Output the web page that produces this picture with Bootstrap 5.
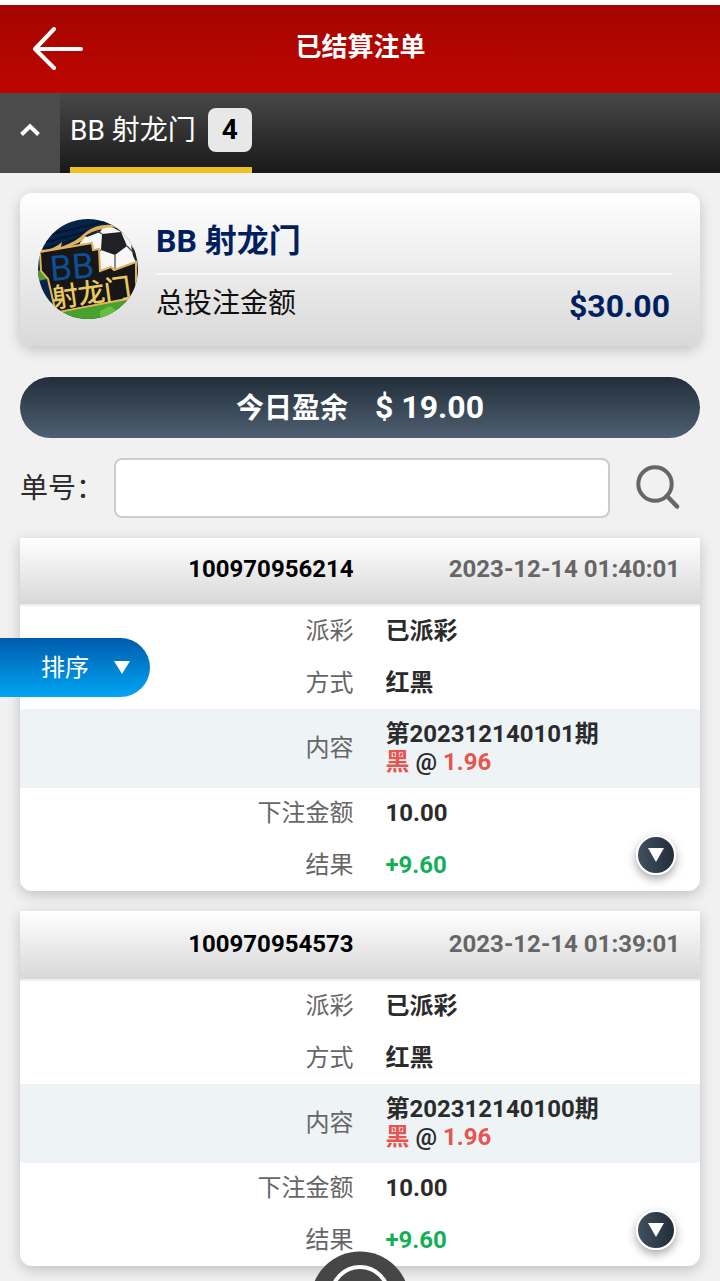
<!DOCTYPE html>
<html lang="zh-CN">
<head>
  <meta charset="UTF-8">
  <meta name="viewport" content="width=device-width, initial-scale=1.0">
  <title>已结算注单</title>
  <link href="https://cdn.jsdelivr.net/npm/bootstrap@5.3.3/dist/css/bootstrap.min.css" rel="stylesheet">
  <style>
    html { overflow: hidden; }
    body {
      height: 1281px;
      background: #f1f1f1;
      border-top: 5px solid #fff;
      font-family: Roboto, "Noto Sans CJK SC", sans-serif;
      font-size: 24px;
      line-height: 28px;
      color: #2b2b2b;
    }
    svg { display: block; }

    .top-bar { height: 88px; background: linear-gradient(#a40500, #be0600); }
    .back-link { width: 97px; padding-left: 32px; }
    .page-title { font-size: 26px; line-height: 30px; padding-bottom: 4px; }

    .game-tabs { height: 80px; background: linear-gradient(#484848, #191919); }
    .tab-toggle { width: 60px; padding-bottom: 6px; background: #4b4b4b; }
    .game-tab { margin-left: 10px; font-size: 28px; border-bottom: 6px solid #f0c020; }
    .tab-name { padding-top: 1px; }
    .tab-count { width: 44px; height: 44px; margin-left: 12px; border-radius: 8px; background: #e8e8e8; }

    .summary { height: 153px; margin-top: 20px; padding: 0 28px 1px 18px; border-radius: 12px; background: linear-gradient(#fff, #d9d9d9); box-shadow: 0 4px 14px rgba(0, 0, 0, .2); }
    .summary-text { margin-left: 18px; }
    .navy { color: #001f5f; }
    .game-name { height: 68px; padding-top: 2px; font-size: 32px; border-bottom: 2px solid #f6f6f6; }
    .total-row { height: 56px; padding: 2px 2px 0 0; font-size: 28px; color: #111; }
    .total-sum { font-size: 32px; padding-top: 4px; }

    .profit { height: 61px; margin-top: 31px; font-size: 28px; background: linear-gradient(#222e3a, #4f6072); }
    .profit-label { padding-top: 2px; }
    .profit-sum { margin-left: 27px; padding-bottom: 2px; font-size: 32px; }

    .search-row { height: 60px; margin: 20px 0; font-size: 28px; }
    .search-label { width: 94px; padding-top: 1px; }
    .search-row .form-control { width: 496px; height: 60px; border: 2px solid #ccc; border-radius: 8px; }
    .search-icon { margin: 0 0 2px 26px; }

    .bet { position: relative; margin-bottom: 20px; border-radius: 0 0 12px 12px; box-shadow: 0 4px 14px rgba(0, 0, 0, .2); }
    .bet-head { height: 70px; padding: 0 20px 2px 0; border-bottom: 2px solid #efefef; background: linear-gradient(#fff, #d8d8d8) padding-box; }
    .bet-first .bet-head { height: 68px; padding-bottom: 4px; }
    .bet-id, .bet-label { width: 333.5px; text-align: right; }
    .bet-id { color: #000; }
    .bet-time, .bet-label { color: #666; }
    .bet-row { height: 51.5px; padding-bottom: 1px; }
    .bet-value { margin-left: 32px; }
    .bet-content { height: 79px; background: #eef4f6; }
    .picked { color: #e85450; }
    .win { color: #13af58; }
    .expand { position: absolute; right: 24px; bottom: 16px; width: 40px; height: 40px; border: 2px solid #fff; border-radius: 50%; background: linear-gradient(90deg, #41505f, #222d39); box-shadow: 0 4px 10px rgba(0, 0, 0, .35); }

    .sort-btn { position: absolute; left: 0; top: 638px; width: 150px; height: 59px; padding-left: 41px; border-radius: 0 30px 30px 0; background: linear-gradient(#005bac, #00a6f4); }
    .sort-arrow { margin-left: 25px; }
    .home-btn { position: fixed; left: 308px; top: 1250px; }
  </style>
</head>
<body>
  <!-- Header -->
  <header class="top-bar d-flex align-items-center text-white">
    <a class="back-link" href="#" aria-label="返回">
      <svg width="52" height="44" viewBox="0 0 52 44" fill="none" stroke="#fff" stroke-width="4" stroke-linecap="round" stroke-linejoin="round">
        <path d="M22 2 3 22l19 19M3 22h46"/>
      </svg>
    </a>
    <h1 class="page-title flex-fill text-center fw-bold mb-0 pe-5 me-5">已结算注单</h1>
  </header>

  <!-- Game tabs -->
  <nav class="game-tabs d-flex text-white">
    <div class="tab-toggle d-flex align-items-center justify-content-center">
      <svg width="20" height="14" viewBox="0 0 20 14" fill="none" stroke="#fff" stroke-width="4"><path d="M1.500 11.500 10 3.200l8.500 8.300"/></svg>
    </div>
    <div class="game-tab d-flex align-items-center">
      <span class="tab-name">BB 射龙门</span>
      <span class="tab-count d-flex align-items-center justify-content-center fw-bold text-black">4</span>
    </div>
  </nav>

  <main class="px-3 mx-1">
    <!-- Summary -->
    <section class="summary d-flex align-items-center">
      <svg width="100" height="100" viewBox="0 0 100 100">
        <defs>
          <clipPath id="logoClip"><circle cx="50" cy="50" r="50"/></clipPath>
        </defs>
        <g clip-path="url(#logoClip)">
          <rect width="100" height="100" fill="#062448"/>
          <path d="M10 16 70 2M8 23 55 11M5 30 45 18" stroke="#04162f" stroke-width="2"/>
          <path d="M0 30Q13 33 24 23L23 28Q38 23 48 13 62 3 80 7L88 13 60 13 50 26 0 40Z" fill="#e2b35d"/>
          <path d="M3 34Q30 32 52 17L48 27 4 36Z" fill="#171717"/>
          <path d="M42 24Q50 13 64 10 80 5 92 17L98 40V60H50Z" fill="#f7f7f7"/>
          <path d="M64 15 83 13 89 27 77 36 63 31Z" fill="#202126"/>
          <path d="M47 17Q54 12 64 10L62 13 49 18Z M74 8 86 10 89 16 85 14Z M93 26Q99 34 98 43L95 37Z" fill="#202126"/>
          <path d="M77 36V50M63 31 55 35M89 27 95 33M64 15 59 12M83 13 85 10" stroke="#444" stroke-width="1.200" fill="none"/>
          <path d="M-2 48 9 60 0 62Z" fill="#4b9e31"/>
          <path d="M2 33 54 24 55 31 61 30 62 52 73 48 76 51 98 43 98 78 18 94 10 60 3 52Z" fill="#171717" stroke="#e2b35d" stroke-width="2"/>
          <path d="M14 95 98 79V100H14Z" fill="#49a12d"/>
          <path d="M62 92 72 87 82 94 62 100Z" fill="#69bd42"/>
          <path d="M14 94 96 79" stroke="#e2b35d" stroke-width="1.500"/>
          <text transform="translate(13 62) rotate(-5)" font-size="35" textLength="44" lengthAdjust="spacingAndGlyphs" fill="#0d4e98">BB</text>
          <text transform="translate(15 89) rotate(-8)" font-size="27" textLength="80" font-weight="500" fill="#eac961">射龙门</text>
        </g>
      </svg>
      <div class="summary-text flex-fill">
        <div class="game-name navy d-flex align-items-center fw-bold">BB 射龙门</div>
        <div class="total-row d-flex align-items-center justify-content-between">
          <span>总投注金额</span>
          <span class="total-sum navy fw-bold">$30.00</span>
        </div>
      </div>
    </section>

    <div class="profit rounded-pill d-flex align-items-center justify-content-center text-white fw-bold">
      <span class="profit-label">今日盈余</span><span class="profit-sum">$ 19.00</span>
    </div>

    <!-- Search -->
    <form class="search-row d-flex align-items-center">
      <label class="search-label" for="betNo">单号：</label>
      <input type="text" id="betNo" class="form-control">
      <svg class="search-icon" width="44" height="46" viewBox="0 0 44 46" fill="none" stroke="#666" stroke-linecap="round">
        <circle cx="19" cy="20" r="16.700" stroke-width="4"/>
        <path d="M31 32 41 42.500" stroke-width="4.500"/>
      </svg>
    </form>

    <!-- Bets -->
    <article class="bet bet-first bg-white">
      <div class="bet-head d-flex align-items-center fw-bold">
        <span class="bet-id">100970956214</span>
        <span class="bet-time ms-auto">2023-12-14 01:40:01</span>
      </div>
      <div class="bet-row d-flex align-items-center"><span class="bet-label">派彩</span><span class="bet-value fw-bold">已派彩</span></div>
      <div class="bet-row d-flex align-items-center"><span class="bet-label">方式</span><span class="bet-value fw-bold">红黑</span></div>
      <div class="bet-row bet-content d-flex align-items-center">
        <span class="bet-label">内容</span>
        <div class="bet-value fw-bold">第202312140101期<br><span class="picked">黑</span> <span class="fw-semibold">@</span> <span class="picked">1.96</span></div>
      </div>
      <div class="bet-row d-flex align-items-center"><span class="bet-label">下注金额</span><span class="bet-value fw-bold">10.00</span></div>
      <div class="bet-row d-flex align-items-center"><span class="bet-label">结果</span><span class="bet-value fw-bold win">+9.60</span></div>
      <div class="expand d-flex align-items-center justify-content-center">
        <svg width="16" height="14" viewBox="0 0 16 14"><path d="M0 0h16L8 14z" fill="#fff"/></svg>
      </div>
    </article>

    <article class="bet bg-white">
      <div class="bet-head d-flex align-items-center fw-bold">
        <span class="bet-id">100970954573</span>
        <span class="bet-time ms-auto">2023-12-14 01:39:01</span>
      </div>
      <div class="bet-row d-flex align-items-center"><span class="bet-label">派彩</span><span class="bet-value fw-bold">已派彩</span></div>
      <div class="bet-row d-flex align-items-center"><span class="bet-label">方式</span><span class="bet-value fw-bold">红黑</span></div>
      <div class="bet-row bet-content d-flex align-items-center">
        <span class="bet-label">内容</span>
        <div class="bet-value fw-bold">第202312140100期<br><span class="picked">黑</span> <span class="fw-semibold">@</span> <span class="picked">1.96</span></div>
      </div>
      <div class="bet-row d-flex align-items-center"><span class="bet-label">下注金额</span><span class="bet-value fw-bold">10.00</span></div>
      <div class="bet-row d-flex align-items-center"><span class="bet-label">结果</span><span class="bet-value fw-bold win">+9.60</span></div>
      <div class="expand d-flex align-items-center justify-content-center">
        <svg width="16" height="14" viewBox="0 0 16 14"><path d="M0 0h16L8 14z" fill="#fff"/></svg>
      </div>
    </article>
  </main>

  <!-- Floating buttons -->
  <div class="sort-btn d-flex align-items-center text-white">
    <span>排序</span>
    <svg class="sort-arrow" width="16" height="13" viewBox="0 0 16 13"><path d="M0 0h16L8 13z" fill="#fff"/></svg>
  </div>
  <svg class="home-btn" width="104" height="104" viewBox="0 0 104 104">
    <circle cx="52" cy="51" r="49.500" fill="#464646"/>
    <circle cx="52" cy="45.500" r="28.500" fill="none" stroke="#fff" stroke-width="4"/>
  </svg>

  <script src="https://cdn.jsdelivr.net/npm/bootstrap@5.3.3/dist/js/bootstrap.bundle.min.js"></script>
</body>
</html>
